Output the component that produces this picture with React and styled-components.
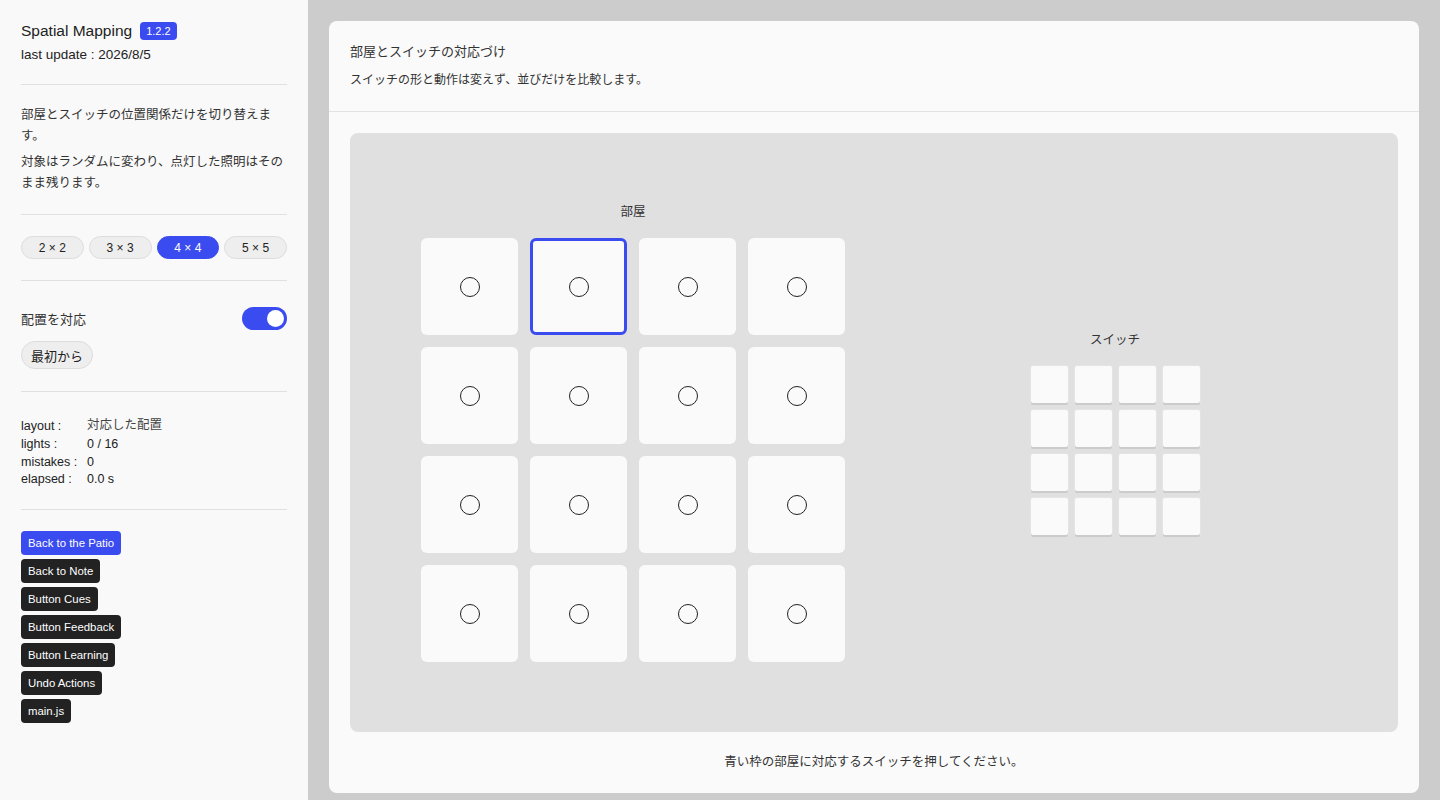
import React, { useState } from 'react';
import styled, { createGlobalStyle, css } from 'styled-components';

const BLUE = '#3a4bf0';

const GlobalStyle = createGlobalStyle`
  html, body {
    margin: 0;
    padding: 0;
    height: 100%;
  }
  body {
    font-family: "Liberation Sans", Arial, "Noto Sans CJK JP", sans-serif;
    color: #222;
    background: #cccccc;
  }
  #root {
    height: 100%;
  }
`;

const Shell = styled.div`
  display: flex;
  height: 800px;
  overflow: hidden;
`;

const Sidebar = styled.aside`
  width: 308px;
  flex: none;
  box-sizing: border-box;
  padding: 21px 21px;
  background: #f9f9f9;
  overflow: hidden;
`;

const TitleRow = styled.div`
  display: flex;
  align-items: center;
  gap: 8px;
  height: 19px;
`;

const Title = styled.h1`
  margin: 0;
  font-size: 15.5px;
  font-weight: 400;
  color: #222;
`;

const Badge = styled.span`
  background: ${BLUE};
  color: #fff;
  font-size: 11px;
  line-height: 18px;
  padding: 0 6px;
  border-radius: 4px;
`;

const Updated = styled.div`
  margin-top: 7px;
  font-size: 13.5px;
  color: #222;
`;

const Divider = styled.hr`
  border: 0;
  border-top: 1px solid #e0e0e0;
  margin: ${({ $gap }) => $gap || '21px'} 0;
`;

const Para = styled.p`
  margin: 0 0 5px;
  font-size: 12.5px;
  line-height: 21px;
  color: #333;
`;

const Segments = styled.div`
  display: flex;
  gap: 5px;
`;

const Segment = styled.button`
  flex: 1;
  height: 23px;
  border-radius: 12px;
  font-family: inherit;
  font-size: 12px;
  border: 1px solid #dddddd;
  background: #eeeeee;
  color: #222;
  padding: 0;
  cursor: pointer;
  ${({ $active }) =>
    $active &&
    css`
      background: ${BLUE};
      border-color: ${BLUE};
      color: #fff;
    `}
`;

const ToggleRow = styled.div`
  display: flex;
  align-items: center;
  justify-content: space-between;
  margin-top: 26px;
  font-size: 13px;
  color: #333;
`;

const Switch = styled.button`
  width: 45px;
  height: 23px;
  border-radius: 12px;
  border: 0;
  padding: 0;
  background: ${({ $on }) => ($on ? BLUE : '#bbb')};
  position: relative;
  cursor: pointer;
  &::after {
    content: '';
    position: absolute;
    top: 3px;
    left: ${({ $on }) => ($on ? '25px' : '3px')};
    width: 17px;
    height: 17px;
    border-radius: 50%;
    background: #fff;
  }
`;

const PillButton = styled.button`
  margin-top: 11px;
  height: 28px;
  padding: 0 9px;
  border-radius: 14px;
  border: 1px solid #dddddd;
  background: #eeeeee;
  font-family: inherit;
  font-size: 13px;
  color: #222;
  cursor: pointer;
`;

const Stats = styled.dl`
  display: grid;
  grid-template-columns: 66px 1fr;
  margin: 0;
  font-size: 12.5px;
  line-height: 17.5px;
  color: #222;
  dt, dd {
    margin: 0;
  }
`;

const JaValue = styled.dd`
  color: #444;
  line-height: 20px;
  font-size: 12.5px;
  padding-top: 1px;
`;

const JaLabel = styled.dt`
  line-height: 20px;
  padding-top: 2px;
`;

const Links = styled.nav`
  display: flex;
  flex-direction: column;
  align-items: flex-start;
  gap: 4px;
`;

const LinkButton = styled.a`
  display: inline-block;
  height: 24px;
  line-height: 24px;
  padding: 0 7px;
  border-radius: 4px;
  font-size: 11.4px;
  color: #fff;
  text-decoration: none;
  background: ${({ $primary }) => ($primary ? BLUE : '#222')};
`;

const Main = styled.main`
  flex: 1;
  padding: 21px 21px 7px;
  box-sizing: border-box;
  display: flex;
`;

const Card = styled.section`
  flex: 1;
  background: #fafafa;
  border-radius: 8px;
  display: flex;
  flex-direction: column;
`;

const CardHeader = styled.header`
  height: 91px;
  box-sizing: border-box;
  padding: 22px 21px 0;
  border-bottom: 1px solid #e2e2e2;
`;

const CardTitle = styled.h2`
  margin: 0;
  font-size: 13px;
  font-weight: 400;
  line-height: 18px;
  color: #333;
`;

const CardSub = styled.p`
  margin: 10px 0 0;
  font-size: 12px;
  line-height: 18px;
  color: #333;
`;

const CardBody = styled.div`
  flex: 1;
  display: flex;
  flex-direction: column;
  padding: 21px 21px 0;
`;

const Stage = styled.div`
  height: 599px;
  background: #e0e0e0;
  border-radius: 8px;
  display: grid;
  grid-template-columns: 1fr 1fr;
  align-items: center;
  padding: 0 42px;
`;

const Pane = styled.div`
  display: flex;
  flex-direction: column;
  align-items: center;
`;

const PaneLabel = styled.div`
  font-size: 12.5px;
  color: #333;
  line-height: 18px;
  margin-bottom: ${({ $gap }) => $gap};
`;

const Grid = styled.div`
  display: grid;
  grid-template-columns: repeat(${({ $n }) => $n}, ${({ $size }) => $size}px);
  gap: ${({ $gap }) => $gap}px;
`;

const Room = styled.div`
  width: 97px;
  height: 97px;
  box-sizing: border-box;
  background: #fafafa;
  border-radius: 6px;
  display: flex;
  align-items: center;
  justify-content: center;
  border: 3px solid ${({ $target }) => ($target ? BLUE : 'transparent')};
`;

const Bulb = styled.span`
  width: 20px;
  height: 20px;
  box-sizing: border-box;
  border-radius: 50%;
  border: 1px solid #222;
  background: ${({ $lit }) => ($lit ? '#ffd84a' : 'transparent')};
`;

const Key = styled.button`
  width: 37px;
  height: 37px;
  padding: 0;
  border: 0;
  border-radius: 2px;
  background: #fafafa;
  box-shadow: 0 2px 0 #cbcbcb, 0 0 0 1px #e4e4e4;
  cursor: pointer;
`;

const Footer = styled.div`
  flex: 1;
  display: flex;
  align-items: center;
  justify-content: center;
  padding-bottom: 4px;
  font-size: 12.5px;
  color: #333;
`;

const SIZES = [2, 3, 4, 5];
const LINKS = [
  'Back to the Patio',
  'Back to Note',
  'Button Cues',
  'Button Feedback',
  'Button Learning',
  'Undo Actions',
  'main.js',
];

export default function App() {
  const [size, setSize] = useState(4);
  const [mapped, setMapped] = useState(true);
  const cells = Array.from({ length: size * size }, (_, i) => i);
  const target = 1;

  return (
    <Shell>
      <GlobalStyle />
      <Sidebar>
        <TitleRow>
          <Title>Spatial Mapping</Title>
          <Badge>1.2.2</Badge>
        </TitleRow>
        <Updated>last update : 2026/8/5</Updated>
        <Divider $gap="22px 0 20px" />
        <Para>部屋とスイッチの位置関係だけを切り替えます。</Para>
        <Para>対象はランダムに変わり、点灯した照明はそのまま残ります。</Para>
        <Divider $gap="20px 0 21px" />
        <Segments>
          {SIZES.map((n) => (
            <Segment key={n} $active={n === size} onClick={() => setSize(n)}>
              {n} × {n}
            </Segment>
          ))}
        </Segments>
        <Divider $gap="21px 0 0" />
        <ToggleRow>
          配置を対応
          <Switch $on={mapped} onClick={() => setMapped(!mapped)} aria-label="配置を対応" />
        </ToggleRow>
        <PillButton>最初から</PillButton>
        <Divider $gap="22px" />
        <Stats>
          <JaLabel>layout :</JaLabel>
          <JaValue>{mapped ? '対応した配置' : 'ばらばらの配置'}</JaValue>
          <dt>lights :</dt>
          <dd>0 / {size * size}</dd>
          <dt>mistakes :</dt>
          <dd>0</dd>
          <dt>elapsed :</dt>
          <dd>0.0 s</dd>
        </Stats>
        <Divider $gap="20px 0 21px" />
        <Links>
          {LINKS.map((label, i) => (
            <LinkButton key={label} href="#" $primary={i === 0}>
              {label}
            </LinkButton>
          ))}
        </Links>
      </Sidebar>
      <Main>
        <Card>
          <CardHeader>
            <CardTitle>部屋とスイッチの対応づけ</CardTitle>
            <CardSub>スイッチの形と動作は変えず、並びだけを比較します。</CardSub>
          </CardHeader>
          <CardBody>
            <Stage>
              <Pane>
                <PaneLabel $gap="17px">部屋</PaneLabel>
                <Grid $n={size} $size={97} $gap={12}>
                  {cells.map((i) => (
                    <Room key={i} $target={i === target}>
                      <Bulb />
                    </Room>
                  ))}
                </Grid>
              </Pane>
              <Pane>
                <PaneLabel $gap="17px">スイッチ</PaneLabel>
                <Grid $n={size} $size={37} $gap={7}>
                  {cells.map((i) => (
                    <Key key={i} aria-label={`switch ${i + 1}`} />
                  ))}
                </Grid>
              </Pane>
            </Stage>
            <Footer>青い枠の部屋に対応するスイッチを押してください。</Footer>
          </CardBody>
        </Card>
      </Main>
    </Shell>
  );
}
